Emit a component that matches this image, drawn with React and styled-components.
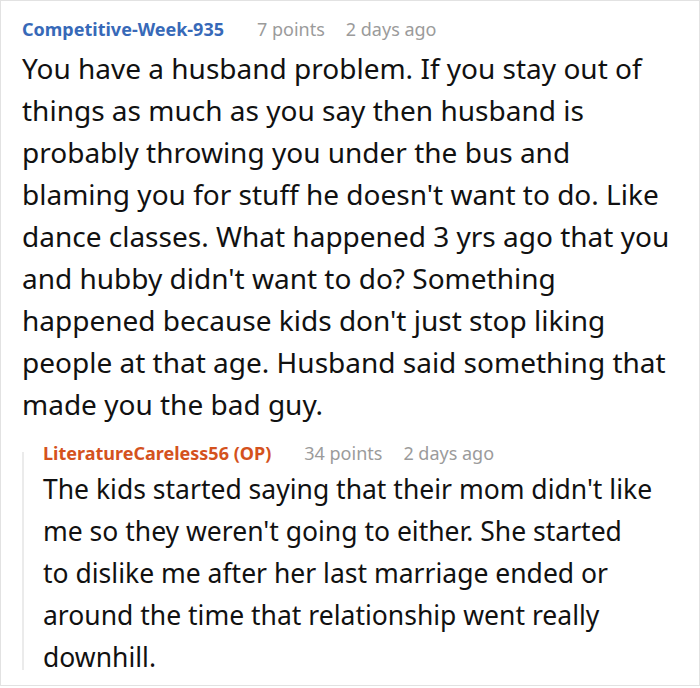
import styled, { createGlobalStyle } from "styled-components";

const GlobalStyle = createGlobalStyle`
  body {
    margin: 0;
    background: #fff;
    font-family: "Noto Sans", "Open Sans", sans-serif;
  }
`;

const Card = styled.div`
  box-sizing: border-box;
  width: 700px;
  height: 686px;
  border: 1px solid #e2e2e2;
  padding: 16px 14px 0 21px;
  overflow: hidden;
`;

const Header = styled.div`
  display: flex;
  align-items: baseline;
  gap: 21px;
  font-size: 18px;
  line-height: 24px;
`;

const Author = styled.span`
  font-weight: 700;
  color: ${(p) => (p.$op ? "#d4521d" : "#3769b8")};
  margin-right: 12px;
`;

const Meta = styled.span`
  color: #9b9b9b;
`;

const Body = styled.p`
  margin: ${(p) => p.$gap}px 0 0;
  max-width: ${(p) => p.$width};
  font-size: ${(p) => p.$size}px;
  line-height: 42px;
  color: #111;
`;

const Reply = styled.div`
  position: relative;
  margin-top: 16px;
  padding-left: 21px;

  &::before {
    content: "";
    position: absolute;
    left: 0;
    top: 11px;
    bottom: 8px;
    width: 2px;
    background: #ebebeb;
  }
`;

const Comment = ({
  author,
  op,
  points,
  when,
  gap = 6,
  size = 28,
  width = "none",
  children,
}) => (
  <div>
    <Header>
      <Author $op={op}>{author}</Author>
      <Meta>{points}</Meta>
      <Meta>{when}</Meta>
    </Header>
    <Body $gap={gap} $size={size} $width={width}>
      {children}
    </Body>
  </div>
);

export default function App() {
  return (
    <>
      <GlobalStyle />
      <Card>
        <Comment author="Competitive-Week-935" points="7 points" when="2 days ago">
          You have a husband problem. If you stay out of things as much as you
          say then husband is probably throwing you under the bus and blaming
          you for stuff he doesn't want to do. Like dance classes. What
          happened 3 yrs ago that you and hubby didn't want to do? Something
          happened because kids don't just stop liking people at that age.
          Husband said something that made you the bad guy.
        </Comment>
        <Reply>
          <Comment
            author="LiteratureCareless56 (OP)"
            op
            points="34 points"
            when="2 days ago"
            gap={3}
            size={26.5}
            width="610px"
          >
            The kids started saying that their mom didn't like me so they
            weren't going to either. She started to dislike me after her last
            marriage ended or around the time that relationship went really
            downhill.
          </Comment>
        </Reply>
      </Card>
    </>
  );
}
